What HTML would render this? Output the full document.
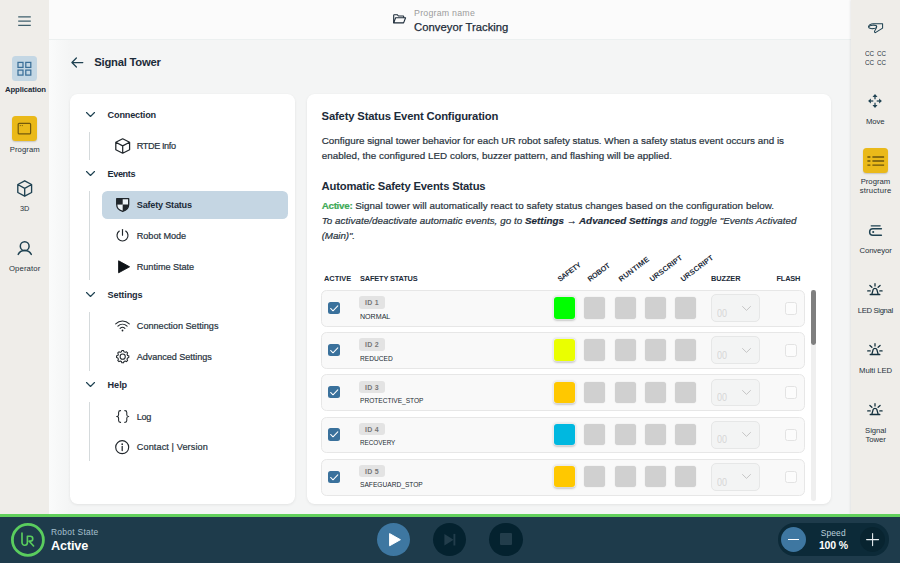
<!DOCTYPE html>
<html><head><meta charset="utf-8"><title>Signal Tower</title>
<style>
html,body{margin:0;padding:0}
body{width:900px;height:563px;overflow:hidden;position:relative;background:#f4f5f5;font-family:"Liberation Sans",sans-serif;}
.a{position:absolute}
.t{position:absolute;white-space:nowrap;line-height:1;font-family:"Liberation Sans",sans-serif}
svg{position:absolute;overflow:visible}
#ls{left:0;top:0;width:49px;height:514px;background:#efede9}
#lsg{left:49px;top:39px;width:21px;height:475px;background:linear-gradient(90deg,#fafbfb,#f4f5f5)}
#hd{left:49px;top:0;width:802px;height:38.5px;background:#fbfbfb;border-bottom:1px solid #ecf0f0}
#rs{left:851px;top:0;width:49px;height:514px;background:#efede9;box-shadow:-1px 0 2px rgba(0,0,0,.07)}
#bb{left:0;top:513.5px;width:900px;height:50px;background:#1e3b4b}
#gl{left:0;top:513.6px;width:900px;height:3.1px;background:#62d05c}
.card{background:#fff;border-radius:7.5px;box-shadow:0 1px 3px rgba(0,0,0,.07),0 0 1px rgba(0,0,0,.04)}
.btn{border-radius:3.5px}
.vl{width:1px;background:#d5dadc}
.row{left:321.3px;width:481.4px;height:34px;background:#f9f9f9;border:1px solid #e7e7e7;border-radius:5.5px;box-sizing:content-box}
.cb{width:12.2px;height:12.2px;border-radius:2.5px;background:#3a719c}
.bd{width:25.6px;height:12.4px;border-radius:3px;background:#e3e3e3}
.sw{width:21.3px;height:21.6px;border-radius:3px;background:#d0d0d0;box-shadow:0 0 1.2px rgba(0,0,0,.16)}
.sel{width:46.4px;height:25.8px;border:1px solid #e6e7e7;border-radius:5px;background:#f3f4f4}
.fc{width:10.5px;height:10.5px;border:1px solid #e3e3e3;border-radius:2.5px;background:#fcfcfc}
.rh{position:absolute;white-space:nowrap;line-height:1;font-size:7.05px;font-weight:700;color:#1c2b39;transform-origin:0 100%;transform:rotate(-39.5deg)}
.circ{border-radius:50%}
</style></head>
<body>
<div class="a" id="lsg"></div>
<div class="a" id="ls"></div>
<div class="a" id="hd"></div>
<div class="a" id="rs"></div>
<svg style="left:18px;top:15px" width="13" height="12" viewBox="0 0 13 12"><path d="M0.2 1.8H12.8M0.2 6H12.8M0.2 10.4H12.8" stroke="#3f5f6c" stroke-width="1.25" fill="none"/></svg>
<div class="a btn" style="left:12.1px;top:56.2px;width:24.8px;height:25.3px;background:#c4d7e4"></div>
<svg style="left:12.1px;top:56.2px" width="24.8" height="25.3" viewBox="0 0 24.8 25.3"><g fill="none" stroke="#3a6f98" stroke-width="1.25"><rect x="6" y="6.4" width="5" height="5"/><rect x="13.8" y="6.4" width="5" height="5"/><rect x="6" y="14.1" width="5" height="5"/><rect x="13.8" y="14.1" width="5" height="5"/></g></svg>
<div class="a btn" style="left:12.1px;top:116px;width:24.8px;height:25.3px;background:#eab919;box-shadow:0 1px 1.5px rgba(0,0,0,.18)"></div>
<svg style="left:12.1px;top:116px" width="24.8" height="25.3" viewBox="0 0 24.8 25.3"><rect x="6.2" y="7.3" width="12.4" height="10.6" rx="1" fill="none" stroke="#72590c" stroke-width="1.2"/><path d="M7.8 9.6h1M9.8 9.6h1" stroke="#72590c" stroke-width="1"/></svg>
<svg style="left:17px;top:179.9px" width="15.4" height="17" viewBox="0 0 15.4 17"><path d="M7.7 0.8L14.6 4.5V12.5L7.7 16.2L0.8 12.5V4.5Z M0.8 4.5L7.7 8.3L14.6 4.5M7.7 8.3V16.2" fill="none" stroke="#1f4252" stroke-width="1.35" stroke-linejoin="round"/></svg>
<svg style="left:16px;top:239px" width="18" height="18" viewBox="0 0 18 18"><circle cx="8.7" cy="7.2" r="4.4" fill="none" stroke="#1f4252" stroke-width="1.5"/><path d="M2.2 15.4C3.8 12.4 6.2 11.6 8.7 11.6S13.6 12.4 15.3 15.4" fill="none" stroke="#1f4252" stroke-width="1.5" stroke-linecap="round"/></svg>
<svg style="left:393.3px;top:14.2px" width="13.2" height="9.6" viewBox="0 0 13.2 9.6"><path d="M0.7 8.9V1.2Q0.7 0.7 1.2 0.7H4.2L5.4 2H10.2Q10.7 2 10.7 2.5V3.8" fill="none" stroke="#1c2b39" stroke-width="1.1" stroke-linejoin="round"/><path d="M0.7 8.9L2.6 3.8H12.6L10.6 8.9Z" fill="none" stroke="#1c2b39" stroke-width="1.1" stroke-linejoin="round"/></svg>
<svg style="left:71px;top:56.5px" width="13" height="11" viewBox="0 0 13 11"><path d="M11.8 5.5H1M5.4 1L0.9 5.5L5.4 10" fill="none" stroke="#1f4252" stroke-width="1.25" stroke-linecap="round" stroke-linejoin="round"/></svg>
<div class="a card" style="left:70px;top:94px;width:225px;height:410.4px"></div>
<div class="a card" style="left:307px;top:94px;width:524px;height:410.4px"></div>
<svg style="left:86.1px;top:111.8px" width="9" height="5.2" viewBox="0 0 9 5.2"><path d="M0.5 0.5L4.5 4.5L8.5 0.5" fill="none" stroke="#1f4252" stroke-width="1.15" stroke-linecap="round" stroke-linejoin="round"/></svg>
<svg style="left:86.1px;top:170.9px" width="9" height="5.2" viewBox="0 0 9 5.2"><path d="M0.5 0.5L4.5 4.5L8.5 0.5" fill="none" stroke="#1f4252" stroke-width="1.15" stroke-linecap="round" stroke-linejoin="round"/></svg>
<svg style="left:86.1px;top:292.0px" width="9" height="5.2" viewBox="0 0 9 5.2"><path d="M0.5 0.5L4.5 4.5L8.5 0.5" fill="none" stroke="#1f4252" stroke-width="1.15" stroke-linecap="round" stroke-linejoin="round"/></svg>
<svg style="left:86.1px;top:382.1px" width="9" height="5.2" viewBox="0 0 9 5.2"><path d="M0.5 0.5L4.5 4.5L8.5 0.5" fill="none" stroke="#1f4252" stroke-width="1.15" stroke-linecap="round" stroke-linejoin="round"/></svg>
<div class="a vl" style="left:88.8px;top:131.6px;height:28.1px"></div>
<div class="a vl" style="left:88.8px;top:190.8px;height:89.6px"></div>
<div class="a vl" style="left:88.8px;top:312px;height:59.0px"></div>
<div class="a vl" style="left:88.8px;top:402px;height:58.8px"></div>
<div class="a" style="left:102px;top:190.8px;width:185.7px;height:28px;border-radius:5.5px;background:#c5d6e3"></div>
<svg style="left:114.7px;top:138px" width="15.4" height="16" viewBox="0 0 15.4 16"><path d="M7.7 0.8L14.6 4.3V11.7L7.7 15.2L0.8 11.7V4.3Z M0.8 4.3L7.7 7.9L14.6 4.3M7.7 7.9V15.2" fill="none" stroke="#20262b" stroke-width="1.25" stroke-linejoin="round"/></svg>
<svg style="left:116px;top:198px" width="13.4" height="14.2" viewBox="0 0 13.4 14.2"><path d="M0.7 0.7H12.7V6.6C12.7 10.4 9.8 12.6 6.7 13.5C3.6 12.6 0.7 10.4 0.7 6.6Z" fill="#edf3f7" stroke="#20262b" stroke-width="1.3" stroke-linejoin="round"/><path d="M0.7 0.7H6.7V6.6H0.7Z" fill="#20262b"/><path d="M6.7 6.6H12.7C12.7 10.4 9.8 12.6 6.7 13.5Z" fill="#20262b"/></svg>
<svg style="left:115.9px;top:229.1px" width="13" height="12.6" viewBox="0 0 13 12.6"><path d="M3.3 2A5.5 5.5 0 1 0 9.7 2" fill="none" stroke="#20262b" stroke-width="1.15" stroke-linecap="round"/><path d="M6.5 0.6V6.3" stroke="#20262b" stroke-width="1.15" stroke-linecap="round"/></svg>
<svg style="left:118.1px;top:260.1px" width="12.2" height="13.6" viewBox="0 0 12.2 13.6"><path d="M0.6 0.8L11.6 6.8L0.6 12.8Z" fill="#0d1216" stroke="#0d1216" stroke-width="0.9" stroke-linejoin="round"/></svg>
<svg style="left:115.1px;top:320.4px" width="15" height="11.6" viewBox="0 0 15 11.6"><g fill="none" stroke="#20262b" stroke-width="1.1" stroke-linecap="round"><path d="M0.7 3.9C4.6 0 10.4 0 14.3 3.9"/><path d="M2.9 6.2C5.6 3.6 9.4 3.6 12.1 6.2"/><path d="M5.1 8.4C6.5 7.1 8.5 7.1 9.9 8.4"/></g><circle cx="7.5" cy="10.5" r="0.9" fill="#20262b"/></svg>
<svg style="left:116px;top:349.9px" width="13.4" height="13.4" viewBox="0 0 13.4 13.4"><path d="M12.84 5.83L12.84 7.57L11.54 7.95L11.01 9.24L11.65 10.43L10.43 11.65L9.24 11.01L7.95 11.54L7.57 12.84L5.83 12.84L5.45 11.54L4.16 11.01L2.97 11.65L1.75 10.43L2.39 9.24L1.86 7.95L0.56 7.57L0.56 5.83L1.86 5.45L2.39 4.16L1.75 2.97L2.97 1.75L4.16 2.39L5.45 1.86L5.83 0.56L7.57 0.56L7.95 1.86L9.24 2.39L10.43 1.75L11.65 2.97L11.01 4.16L11.54 5.45Z" fill="none" stroke="#20262b" stroke-width="1.05" stroke-linejoin="round"/><circle cx="6.7" cy="6.7" r="2.6" fill="none" stroke="#20262b" stroke-width="1.05"/></svg>
<svg style="left:116px;top:409.6px" width="13.4" height="13" viewBox="0 0 13.4 13"><g fill="none" stroke="#20262b" stroke-width="1.05" stroke-linecap="round" stroke-linejoin="round"><path d="M4.6 0.6C2.9 0.6 2.6 1.3 2.6 2.4V4.7C2.6 5.8 1.9 6.5 0.7 6.5C1.9 6.5 2.6 7.2 2.6 8.3V10.6C2.6 11.7 2.9 12.4 4.6 12.4"/><path d="M8.8 0.6C10.5 0.6 10.8 1.3 10.8 2.4V4.7C10.8 5.8 11.5 6.5 12.7 6.5C11.5 6.5 10.8 7.2 10.8 8.3V10.6C10.8 11.7 10.5 12.4 8.8 12.4"/></g></svg>
<svg style="left:115.4px;top:440px" width="14.4" height="14.4" viewBox="0 0 14.4 14.4"><circle cx="7.2" cy="7.2" r="6.5" fill="none" stroke="#20262b" stroke-width="1.15"/><circle cx="7.2" cy="4.2" r="0.85" fill="#20262b"/><path d="M7.2 6.4V10.6" stroke="#20262b" stroke-width="1.25" stroke-linecap="round"/></svg>
<div class="a row" style="top:290px;height:35px"></div>
<div class="a cb" style="left:328px;top:301.9px"></div>
<svg style="left:328px;top:301.9px" width="12.2" height="12.2" viewBox="0 0 12.2 12.2"><path d="M2.6 6.5L5 8.8L9.8 3.9" fill="none" stroke="#fff" stroke-width="1.05" stroke-linecap="round" stroke-linejoin="round"/></svg>
<div class="a bd" style="left:359.2px;top:296.2px"></div>
<div class="a sw" style="left:553.8px;top:297.3px;background:#00ff00;box-shadow:0 0 0 .8px rgba(255,255,255,.7),0 .5px 2.5px rgba(0,0,0,.45)"></div>
<div class="a sw" style="left:584.2px;top:297.3px;"></div>
<div class="a sw" style="left:614.6px;top:297.3px;"></div>
<div class="a sw" style="left:644.9px;top:297.3px;"></div>
<div class="a sw" style="left:675.1px;top:297.3px;"></div>
<div class="a sel" style="left:711.3px;top:294.3px"></div>
<svg style="left:741.6px;top:305.7px" width="9" height="5" viewBox="0 0 9 5"><path d="M0.5 0.5L4.5 4.4L8.5 0.5" fill="none" stroke="#c6c6c6" stroke-width="1" stroke-linecap="round" stroke-linejoin="round"/></svg>
<div class="a fc" style="left:784.7px;top:302.1px"></div>
<div class="a row" style="top:332px;height:35px"></div>
<div class="a cb" style="left:328px;top:344.1px"></div>
<svg style="left:328px;top:344.1px" width="12.2" height="12.2" viewBox="0 0 12.2 12.2"><path d="M2.6 6.5L5 8.8L9.8 3.9" fill="none" stroke="#fff" stroke-width="1.05" stroke-linecap="round" stroke-linejoin="round"/></svg>
<div class="a bd" style="left:359.2px;top:338.3px"></div>
<div class="a sw" style="left:553.8px;top:339.4px;background:#eaff00;box-shadow:0 0 0 .8px rgba(255,255,255,.7),0 .5px 2.5px rgba(0,0,0,.45)"></div>
<div class="a sw" style="left:584.2px;top:339.4px;"></div>
<div class="a sw" style="left:614.6px;top:339.4px;"></div>
<div class="a sw" style="left:644.9px;top:339.4px;"></div>
<div class="a sw" style="left:675.1px;top:339.4px;"></div>
<div class="a sel" style="left:711.3px;top:336.4px"></div>
<svg style="left:741.6px;top:347.8px" width="9" height="5" viewBox="0 0 9 5"><path d="M0.5 0.5L4.5 4.4L8.5 0.5" fill="none" stroke="#c6c6c6" stroke-width="1" stroke-linecap="round" stroke-linejoin="round"/></svg>
<div class="a fc" style="left:784.7px;top:344.2px"></div>
<div class="a row" style="top:374px;height:35px"></div>
<div class="a cb" style="left:328px;top:386.2px"></div>
<svg style="left:328px;top:386.2px" width="12.2" height="12.2" viewBox="0 0 12.2 12.2"><path d="M2.6 6.5L5 8.8L9.8 3.9" fill="none" stroke="#fff" stroke-width="1.05" stroke-linecap="round" stroke-linejoin="round"/></svg>
<div class="a bd" style="left:359.2px;top:380.5px"></div>
<div class="a sw" style="left:553.8px;top:381.6px;background:#ffc800;box-shadow:0 0 0 .8px rgba(255,255,255,.7),0 .5px 2.5px rgba(0,0,0,.45)"></div>
<div class="a sw" style="left:584.2px;top:381.6px;"></div>
<div class="a sw" style="left:614.6px;top:381.6px;"></div>
<div class="a sw" style="left:644.9px;top:381.6px;"></div>
<div class="a sw" style="left:675.1px;top:381.6px;"></div>
<div class="a sel" style="left:711.3px;top:378.6px"></div>
<svg style="left:741.6px;top:390.0px" width="9" height="5" viewBox="0 0 9 5"><path d="M0.5 0.5L4.5 4.4L8.5 0.5" fill="none" stroke="#c6c6c6" stroke-width="1" stroke-linecap="round" stroke-linejoin="round"/></svg>
<div class="a fc" style="left:784.7px;top:386.4px"></div>
<div class="a row" style="top:417px;height:34px"></div>
<div class="a cb" style="left:328px;top:428.4px"></div>
<svg style="left:328px;top:428.4px" width="12.2" height="12.2" viewBox="0 0 12.2 12.2"><path d="M2.6 6.5L5 8.8L9.8 3.9" fill="none" stroke="#fff" stroke-width="1.05" stroke-linecap="round" stroke-linejoin="round"/></svg>
<div class="a bd" style="left:359.2px;top:422.6px"></div>
<div class="a sw" style="left:553.8px;top:423.8px;background:#00b8e0;box-shadow:0 0 0 .8px rgba(255,255,255,.7),0 .5px 2.5px rgba(0,0,0,.45)"></div>
<div class="a sw" style="left:584.2px;top:423.8px;"></div>
<div class="a sw" style="left:614.6px;top:423.8px;"></div>
<div class="a sw" style="left:644.9px;top:423.8px;"></div>
<div class="a sw" style="left:675.1px;top:423.8px;"></div>
<div class="a sel" style="left:711.3px;top:420.8px"></div>
<svg style="left:741.6px;top:432.1px" width="9" height="5" viewBox="0 0 9 5"><path d="M0.5 0.5L4.5 4.4L8.5 0.5" fill="none" stroke="#c6c6c6" stroke-width="1" stroke-linecap="round" stroke-linejoin="round"/></svg>
<div class="a fc" style="left:784.7px;top:428.6px"></div>
<div class="a row" style="top:459px;height:35px"></div>
<div class="a cb" style="left:328px;top:470.5px"></div>
<svg style="left:328px;top:470.5px" width="12.2" height="12.2" viewBox="0 0 12.2 12.2"><path d="M2.6 6.5L5 8.8L9.8 3.9" fill="none" stroke="#fff" stroke-width="1.05" stroke-linecap="round" stroke-linejoin="round"/></svg>
<div class="a bd" style="left:359.2px;top:464.8px"></div>
<div class="a sw" style="left:553.8px;top:465.9px;background:#ffc800;box-shadow:0 0 0 .8px rgba(255,255,255,.7),0 .5px 2.5px rgba(0,0,0,.45)"></div>
<div class="a sw" style="left:584.2px;top:465.9px;"></div>
<div class="a sw" style="left:614.6px;top:465.9px;"></div>
<div class="a sw" style="left:644.9px;top:465.9px;"></div>
<div class="a sw" style="left:675.1px;top:465.9px;"></div>
<div class="a sel" style="left:711.3px;top:462.9px"></div>
<svg style="left:741.6px;top:474.3px" width="9" height="5" viewBox="0 0 9 5"><path d="M0.5 0.5L4.5 4.4L8.5 0.5" fill="none" stroke="#c6c6c6" stroke-width="1" stroke-linecap="round" stroke-linejoin="round"/></svg>
<div class="a fc" style="left:784.7px;top:470.7px"></div>
<div class="a" style="left:811px;top:290px;width:5px;height:210.5px;border-radius:2.5px;background:#efefef"></div>
<div class="a" style="left:811px;top:290px;width:4.8px;height:54.8px;border-radius:2.4px;background:#7f7f7f"></div>
<svg style="left:868px;top:22.7px" width="15.4" height="10.4" viewBox="0 0 15.4 10.4"><g fill="none" stroke="#1f4252" stroke-width="1.05" stroke-linejoin="round" stroke-linecap="round"><path d="M8.6 3.6C8.9 5 7.2 6.4 6.6 8.2C6.4 9 6.8 9.7 7.4 9.6L14.6 5.1V0.7H5.4C2.6 0.7 0.6 2.3 0.6 3.8"/><ellipse cx="4.7" cy="3.9" rx="4" ry="1.75" transform="rotate(-4 4.7 3.9)"/></g></svg>
<svg style="left:868.3px;top:94.2px" width="14" height="14" viewBox="0 0 14 14"><path d="M7.00 5.30L7.00 2.20" stroke="#1f4252" stroke-width="1.25" fill="none"/><path d="M7.00 0.10L9.50 2.90L4.50 2.90Z" fill="#1f4252"/><path d="M7.00 8.70L7.00 11.80" stroke="#1f4252" stroke-width="1.25" fill="none"/><path d="M7.00 13.90L4.50 11.10L9.50 11.10Z" fill="#1f4252"/><path d="M5.30 7.00L2.20 7.00" stroke="#1f4252" stroke-width="1.25" fill="none"/><path d="M0.10 7.00L2.90 4.50L2.90 9.50Z" fill="#1f4252"/><path d="M8.70 7.00L11.80 7.00" stroke="#1f4252" stroke-width="1.25" fill="none"/><path d="M13.90 7.00L11.10 9.50L11.10 4.50Z" fill="#1f4252"/></svg>
<div class="a btn" style="left:862.7px;top:148.2px;width:25.1px;height:25.1px;background:#eab919;box-shadow:0 1px 1.5px rgba(0,0,0,.18)"></div>
<svg style="left:862.7px;top:148.2px" width="25.1" height="25.1" viewBox="0 0 25.1 25.1"><path d="M4.4 9h3M9.4 9h11.7M4.4 13h3M9.4 13h11.7M4.4 17.1h3M9.4 17.1h11.7" stroke="#6b540c" stroke-width="1.35"/></svg>
<svg style="left:869px;top:224.8px" width="13.2" height="11.2" viewBox="0 0 13.2 11.2"><g fill="none" stroke="#1f4252" stroke-width="1.2" stroke-linecap="round"><path d="M2.2 0.8H11.2"/><path d="M12.4 3.8H3.9A3.15 3.15 0 0 0 3.9 10.3H12.4" stroke-width="1.5"/></g><circle cx="4.2" cy="7.05" r="1.05" fill="#1f4252"/></svg>
<svg style="left:867.1px;top:283.2px" width="15.5" height="12.6" viewBox="0 0 15.5 12.6"><g fill="none" stroke="#15323f" stroke-width="1.3" stroke-linecap="round" stroke-linejoin="round"><path d="M8 0.7V3M2.9 2.5L4.9 4.3M13.1 2.5L11.1 4.3M0.7 7.9H3.2M12.8 7.9H15.1"/><path d="M5 10.8L6.2 6.4Q6.5 5.3 8 5.3Q9.5 5.3 9.8 6.4L11 10.8"/></g><path d="M3.4 11.5H12.6" stroke="#15323f" stroke-width="1.7" stroke-linecap="round"/></svg>
<svg style="left:867.1px;top:342.9px" width="15.5" height="12.6" viewBox="0 0 15.5 12.6"><g fill="none" stroke="#15323f" stroke-width="1.3" stroke-linecap="round" stroke-linejoin="round"><path d="M8 0.7V3M2.9 2.5L4.9 4.3M13.1 2.5L11.1 4.3M0.7 7.9H3.2M12.8 7.9H15.1"/><path d="M5 10.8L6.2 6.4Q6.5 5.3 8 5.3Q9.5 5.3 9.8 6.4L11 10.8"/></g><path d="M3.4 11.5H12.6" stroke="#15323f" stroke-width="1.7" stroke-linecap="round"/></svg>
<svg style="left:867.1px;top:402.7px" width="15.5" height="12.6" viewBox="0 0 15.5 12.6"><g fill="none" stroke="#15323f" stroke-width="1.3" stroke-linecap="round" stroke-linejoin="round"><path d="M8 0.7V3M2.9 2.5L4.9 4.3M13.1 2.5L11.1 4.3M0.7 7.9H3.2M12.8 7.9H15.1"/><path d="M5 10.8L6.2 6.4Q6.5 5.3 8 5.3Q9.5 5.3 9.8 6.4L11 10.8"/></g><path d="M3.4 11.5H12.6" stroke="#15323f" stroke-width="1.7" stroke-linecap="round"/></svg>
<div class="a" id="bb"></div><div class="a" id="gl"></div>
<svg style="left:11.3px;top:523.1px" width="33.8" height="33.8" viewBox="0 0 33.8 33.8"><circle cx="16.9" cy="16.9" r="15.5" fill="none" stroke="#5acd5e" stroke-width="2.8"/><g fill="none" stroke="#5acd5e" stroke-width="1.65" stroke-linecap="round" stroke-linejoin="round"><path d="M11 10.2V19.6A2.7 2.7 0 0 0 16.4 19.6V13.3H19.3A2.45 2.45 0 0 1 19.3 18.2H18.2L22.6 23"/></g></svg>
<div class="a circ" style="left:377px;top:522.6px;width:33.4px;height:33.4px;background:#3e77a1"></div>
<svg style="left:377px;top:522.6px" width="33.4" height="33.4" viewBox="0 0 33.4 33.4"><path d="M12.6 10.6L23.4 16.7L12.6 22.8Z" fill="#fff" stroke="#fff" stroke-width="1" stroke-linejoin="round"/></svg>
<div class="a circ" style="left:433px;top:522.6px;width:33.4px;height:33.4px;background:#04222f"></div>
<svg style="left:433px;top:522.6px" width="33.4" height="33.4" viewBox="0 0 33.4 33.4"><path d="M11.4 11L20.6 16.7L11.4 22.4Z" fill="#223d4b"/><path d="M21.4 10.9V22.5" stroke="#223d4b" stroke-width="1.9"/></svg>
<div class="a circ" style="left:489.3px;top:522.6px;width:33.4px;height:33.4px;background:#04222f"></div>
<div class="a" style="left:499.9px;top:533.2px;width:12.2px;height:12.2px;border-radius:1px;background:#223d4b"></div>
<div class="a" style="left:777.8px;top:523.3px;width:111.2px;height:32.4px;border-radius:16.2px;background:#0c2a38"></div>
<div class="a circ" style="left:781.2px;top:527px;width:25.2px;height:25.2px;background:#3e77a1"></div>
<div class="a" style="left:788.2px;top:539px;width:11.2px;height:1.3px;background:#fff"></div>
<div class="a circ" style="left:860.2px;top:527px;width:25.2px;height:25.2px;background:#082430"></div>
<svg style="left:866.2px;top:533px" width="13.2" height="13.2" viewBox="0 0 13.2 13.2"><path d="M6.6 0.6V12.6M0.6 6.6H12.6" stroke="#e8eef1" stroke-width="1.1" stroke-linecap="round"/></svg>
<span class="t" style="left:5.0px;top:86.00px;font-size:7.73px;font-weight:700;color:#1c2b39;letter-spacing:-0.103px;">Application</span>
<span class="t" style="left:9.8px;top:146.00px;font-size:7.73px;color:#28333d;letter-spacing:0.048px;">Program</span>
<span class="t" style="left:19.9px;top:205.00px;font-size:7.73px;color:#28333d;transform-origin:0 0;transform:scaleX(0.9519);">3D</span>
<span class="t" style="left:8.9px;top:265.00px;font-size:7.73px;color:#28333d;letter-spacing:0.133px;">Operator</span>
<span class="t" style="left:414.1px;top:9.00px;font-size:8.8px;color:#9b9b9b;letter-spacing:0.228px;">Program name</span>
<span class="t" style="left:414.1px;top:22.00px;font-size:11.25px;color:#1c2b39;letter-spacing:0.031px;-webkit-text-stroke:0.25px #1c2b39;">Conveyor Tracking</span>
<span class="t" style="left:94.3px;top:57.00px;font-size:11.25px;font-weight:700;color:#1c2b39;letter-spacing:-0.244px;">Signal Tower</span>
<span class="t" style="left:107.6px;top:111.00px;font-size:9.14px;font-weight:700;color:#1c2b39;letter-spacing:-0.176px;">Connection</span>
<span class="t" style="left:136.8px;top:142.00px;font-size:9.14px;-webkit-text-stroke:0.2px;color:#28333d;letter-spacing:-0.405px;">RTDE Info</span>
<span class="t" style="left:107.6px;top:170.00px;font-size:9.14px;font-weight:700;color:#1c2b39;letter-spacing:-0.408px;">Events</span>
<span class="t" style="left:136.8px;top:201.00px;font-size:9.14px;font-weight:700;color:#1c2b39;letter-spacing:-0.218px;">Safety Status</span>
<span class="t" style="left:136.8px;top:232.00px;font-size:9.14px;-webkit-text-stroke:0.2px;color:#28333d;letter-spacing:-0.047px;">Robot Mode</span>
<span class="t" style="left:136.8px;top:263.00px;font-size:9.14px;-webkit-text-stroke:0.2px;color:#28333d;letter-spacing:-0.044px;">Runtime State</span>
<span class="t" style="left:107.6px;top:291.00px;font-size:9.14px;font-weight:700;color:#1c2b39;letter-spacing:-0.143px;">Settings</span>
<span class="t" style="left:136.8px;top:322.00px;font-size:9.14px;-webkit-text-stroke:0.2px;color:#28333d;">Connection Settings</span>
<span class="t" style="left:136.8px;top:353.00px;font-size:9.14px;-webkit-text-stroke:0.2px;color:#28333d;letter-spacing:-0.068px;">Advanced Settings</span>
<span class="t" style="left:107.6px;top:381.00px;font-size:9.14px;font-weight:700;color:#1c2b39;letter-spacing:-0.060px;">Help</span>
<span class="t" style="left:136.8px;top:413.00px;font-size:9.14px;-webkit-text-stroke:0.2px;color:#28333d;letter-spacing:-0.317px;">Log</span>
<span class="t" style="left:136.8px;top:443.00px;font-size:9.14px;-webkit-text-stroke:0.2px;color:#28333d;letter-spacing:0.104px;">Contact | Version</span>
<span class="t" style="left:321.6px;top:111.00px;font-size:11.25px;font-weight:700;color:#1c2b39;letter-spacing:-0.163px;">Safety Status Event Configuration</span>
<span class="t" style="left:321.7px;top:136.00px;font-size:9.84px;-webkit-text-stroke:0.2px;color:#28333d;letter-spacing:0.012px;">Configure signal tower behavior for each UR robot safety status. When a safety status event occurs and is</span>
<span class="t" style="left:321.7px;top:151.00px;font-size:9.84px;-webkit-text-stroke:0.2px;color:#28333d;letter-spacing:0.034px;">enabled, the configured LED colors, buzzer pattern, and flashing will be applied.</span>
<span class="t" style="left:321.6px;top:181.00px;font-size:11.25px;font-weight:700;color:#1c2b39;letter-spacing:-0.187px;">Automatic Safety Events Status</span>
<span class="t" style="left:321.7px;top:201.00px;font-size:9.84px;-webkit-text-stroke:0.2px;color:#28333d;letter-spacing:0.062px;"><b style="color:#3daa57;letter-spacing:-0.3px">Active:</b> Signal tower will automatically react to safety status changes based on the configuration below.</span>
<span class="t" style="left:321.7px;top:216.00px;font-size:9.84px;-webkit-text-stroke:0.2px;font-style:italic;color:#28333d;letter-spacing:0.031px;">To activate/deactivate automatic events, go to <b style="color:#1c2b39">Settings → Advanced Settings</b> and toggle "Events Activated</span>
<span class="t" style="left:321.7px;top:231.00px;font-size:9.84px;-webkit-text-stroke:0.2px;font-style:italic;color:#28333d;letter-spacing:-0.097px;">(Main)".</span>
<span class="t" style="left:324.0px;top:275.00px;font-size:7.4px;font-weight:700;color:#1c2b39;">ACTIVE</span>
<span class="t" style="left:360.1px;top:275.00px;font-size:7.4px;font-weight:700;color:#1c2b39;letter-spacing:-0.171px;">SAFETY STATUS</span>
<span class="t" style="left:711.0px;top:275.00px;font-size:7.4px;font-weight:700;color:#1c2b39;letter-spacing:-0.097px;">BUZZER</span>
<span class="t" style="left:776.6px;top:275.00px;font-size:7.4px;font-weight:700;color:#1c2b39;letter-spacing:-0.235px;">FLASH</span>
<span class="t" style="left:560.0px;top:276.00px;font-size:7.4px;font-weight:700;color:#1c2b39;letter-spacing:-0.411px;transform-origin:0 6px;transform:rotate(-37deg);">SAFETY</span>
<span class="t" style="left:590.4px;top:276.00px;font-size:7.4px;font-weight:700;color:#1c2b39;letter-spacing:-0.197px;transform-origin:0 6px;transform:rotate(-37deg);">ROBOT</span>
<span class="t" style="left:620.9px;top:276.00px;font-size:7.4px;font-weight:700;color:#1c2b39;letter-spacing:0.371px;transform-origin:0 6px;transform:rotate(-37deg);">RUNTIME</span>
<span class="t" style="left:651.6px;top:276.00px;font-size:7.4px;font-weight:700;color:#1c2b39;letter-spacing:0.131px;transform-origin:0 6px;transform:rotate(-37deg);">URSCRIPT</span>
<span class="t" style="left:682.7px;top:276.00px;font-size:7.4px;font-weight:700;color:#1c2b39;letter-spacing:0.131px;transform-origin:0 6px;transform:rotate(-37deg);">URSCRIPT</span>
<span class="t" style="left:865.1px;top:50.00px;font-size:7.6px;color:#28333d;transform-origin:0 0;transform:scaleX(0.8296);">CC</span>
<span class="t" style="left:876.9px;top:50.00px;font-size:7.6px;color:#28333d;transform-origin:0 0;transform:scaleX(0.8205);">CC</span>
<span class="t" style="left:865.1px;top:59.00px;font-size:7.6px;color:#28333d;transform-origin:0 0;transform:scaleX(0.8296);">CC</span>
<span class="t" style="left:876.9px;top:59.00px;font-size:7.6px;color:#28333d;transform-origin:0 0;transform:scaleX(0.8205);">CC</span>
<span class="t" style="left:866.0px;top:118.00px;font-size:7.73px;color:#28333d;letter-spacing:-0.092px;">Move</span>
<span class="t" style="left:860.7px;top:178.00px;font-size:7.73px;color:#28333d;letter-spacing:-0.018px;">Program</span>
<span class="t" style="left:859.7px;top:187.00px;font-size:7.73px;color:#28333d;letter-spacing:0.184px;">structure</span>
<span class="t" style="left:859.5px;top:247.00px;font-size:7.73px;color:#28333d;letter-spacing:-0.107px;">Conveyor</span>
<span class="t" style="left:857.7px;top:307.00px;font-size:7.73px;color:#28333d;letter-spacing:-0.347px;">LED Signal</span>
<span class="t" style="left:859.0px;top:367.00px;font-size:7.73px;color:#28333d;letter-spacing:-0.034px;">Multi LED</span>
<span class="t" style="left:865.1px;top:427.00px;font-size:7.73px;color:#28333d;letter-spacing:-0.074px;">Signal</span>
<span class="t" style="left:865.5px;top:436.00px;font-size:7.73px;color:#28333d;letter-spacing:-0.073px;">Tower</span>
<span class="t" style="left:51.0px;top:528.00px;font-size:8.44px;color:#a7c0cf;letter-spacing:0.282px;">Robot State</span>
<span class="t" style="left:51.0px;top:540.00px;font-size:12.66px;font-weight:700;color:#ffffff;letter-spacing:-0.140px;">Active</span>
<span class="t" style="left:820.7px;top:529.00px;font-size:8.44px;color:#bcd0dc;letter-spacing:0.135px;">Speed</span>
<span class="t" style="left:818.9px;top:540.00px;font-size:10.55px;font-weight:700;color:#ffffff;letter-spacing:-0.152px;">100 %</span>
<span class="t" style="left:365.0px;top:299.00px;font-size:7.0px;font-weight:700;color:#777777;letter-spacing:0.285px;">ID 1</span>
<span class="t" style="left:359.7px;top:313.00px;font-size:7.7px;color:#222b33;transform-origin:0 0;transform:scaleX(0.9212);">NORMAL</span>
<span class="t" style="left:717.0px;top:309.00px;font-size:10.4px;color:#d6d6d6;transform-origin:0 0;transform:scaleX(0.8649);">00</span>
<span class="t" style="left:365.0px;top:341.00px;font-size:7.0px;font-weight:700;color:#777777;letter-spacing:0.285px;">ID 2</span>
<span class="t" style="left:359.7px;top:355.00px;font-size:7.7px;color:#222b33;transform-origin:0 0;transform:scaleX(0.8628);">REDUCED</span>
<span class="t" style="left:717.0px;top:351.00px;font-size:10.4px;color:#d6d6d6;transform-origin:0 0;transform:scaleX(0.8649);">00</span>
<span class="t" style="left:365.0px;top:384.00px;font-size:7.0px;font-weight:700;color:#777777;letter-spacing:0.285px;">ID 3</span>
<span class="t" style="left:359.7px;top:397.00px;font-size:7.7px;color:#222b33;transform-origin:0 0;transform:scaleX(0.8559);">PROTECTIVE_STOP</span>
<span class="t" style="left:717.0px;top:393.00px;font-size:10.4px;color:#d6d6d6;transform-origin:0 0;transform:scaleX(0.8649);">00</span>
<span class="t" style="left:365.0px;top:426.00px;font-size:7.0px;font-weight:700;color:#777777;letter-spacing:0.285px;">ID 4</span>
<span class="t" style="left:359.7px;top:439.00px;font-size:7.7px;color:#222b33;transform-origin:0 0;transform:scaleX(0.8206);">RECOVERY</span>
<span class="t" style="left:717.0px;top:435.00px;font-size:10.4px;color:#d6d6d6;transform-origin:0 0;transform:scaleX(0.8649);">00</span>
<span class="t" style="left:365.0px;top:468.00px;font-size:7.0px;font-weight:700;color:#777777;letter-spacing:0.285px;">ID 5</span>
<span class="t" style="left:359.7px;top:481.00px;font-size:7.7px;color:#222b33;transform-origin:0 0;transform:scaleX(0.8612);">SAFEGUARD_STOP</span>
<span class="t" style="left:717.0px;top:478.00px;font-size:10.4px;color:#d6d6d6;transform-origin:0 0;transform:scaleX(0.8649);">00</span>
</body></html>
